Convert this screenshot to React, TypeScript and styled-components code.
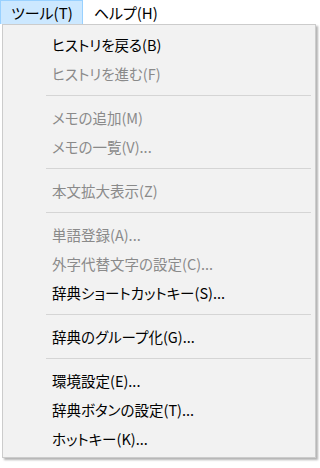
import React from 'react';
import styled, { createGlobalStyle } from 'styled-components';

const GlobalStyle = createGlobalStyle`
  html, body {
    margin: 0;
    padding: 0;
    background: #ffffff;
  }
  body {
    font-family: "Noto Sans CJK JP", "Noto Sans", sans-serif;
    font-feature-settings: "palt";
  }
`;

const Screen = styled.div`
  width: 320px;
  height: 468px;
  overflow: hidden;
  background: #ffffff;
  position: relative;
`;

const MenuBar = styled.div`
  display: flex;
  height: 24px;
  background: #ffffff;
`;

const BarItem = styled.div<{ $active?: boolean }>`
  display: flex;
  align-items: center;
  box-sizing: border-box;
  height: 24px;
  padding: 0 9px 1px 10px;
  font-size: 15px;
  color: #000000;
  background: ${p => (p.$active ? '#cce8ff' : 'transparent')};
  border: 1px solid ${p => (p.$active ? '#99d1ff' : 'transparent')};
  border-bottom: none;
  white-space: nowrap;
`;

const Dropdown = styled.div`
  box-sizing: border-box;
  width: 314px;
  height: 434px;
  margin-left: 2px;
  padding: 5px 2px 4px 2px;
  background: #f2f2f2;
  border: 1px solid #cccccc;
  box-shadow: 2px 2px 2px rgba(0, 0, 0, 0.3);
  display: flex;
  flex-direction: column;
`;

const Item = styled.div<{ $disabled?: boolean }>`
  display: flex;
  align-items: center;
  height: 29px;
  padding-left: 47px;
  font-size: 14.5px;
  color: ${p => (p.$disabled ? '#8a8a8a' : '#000000')};
  white-space: nowrap;
`;

const Separator = styled.div`
  height: 15px;
  display: flex;
  align-items: center;
  padding-left: 41px;
  padding-right: 2px;

  &::after {
    content: '';
    flex: 1;
    height: 1px;
    background: #d5d5d5;
  }
`;

type Entry = { label: string; disabled?: boolean } | 'sep';

const entries: Entry[] = [
  { label: 'ヒストリを戻る(B)' },
  { label: 'ヒストリを進む(F)', disabled: true },
  'sep',
  { label: 'メモの追加(M)', disabled: true },
  { label: 'メモの一覧(V)...', disabled: true },
  'sep',
  { label: '本文拡大表示(Z)', disabled: true },
  'sep',
  { label: '単語登録(A)...', disabled: true },
  { label: '外字代替文字の設定(C)...', disabled: true },
  { label: '辞典ショートカットキー(S)...' },
  'sep',
  { label: '辞典のグループ化(G)...' },
  'sep',
  { label: '環境設定(E)...' },
  { label: '辞典ボタンの設定(T)...' },
  { label: 'ホットキー(K)...' },
];

const App: React.FC = () => {
  return (
    <>
      <GlobalStyle />
      <Screen>
        <MenuBar>
          <BarItem $active>ツール(T)</BarItem>
          <BarItem>ヘルプ(H)</BarItem>
        </MenuBar>
        <Dropdown>
          {entries.map((e, i) =>
            e === 'sep' ? (
              <Separator key={i} />
            ) : (
              <Item key={i} $disabled={e.disabled}>
                {e.label}
              </Item>
            )
          )}
        </Dropdown>
      </Screen>
    </>
  );
};

export default App;
